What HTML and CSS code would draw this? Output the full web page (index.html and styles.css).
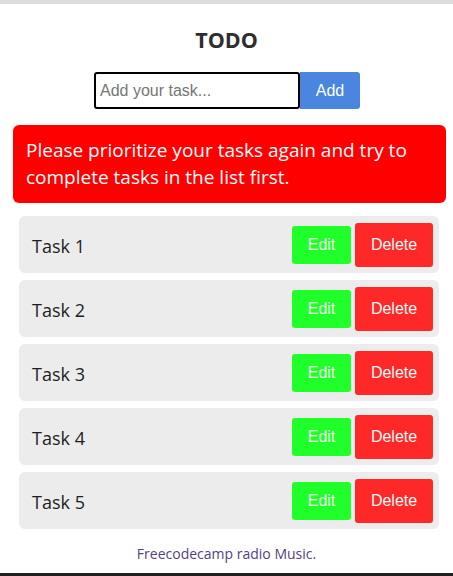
FILE: index.html
```html
<!DOCTYPE html>
<html lang="en">
<head>
<meta charset="utf-8">
<title>TODO</title>
<link rel="stylesheet" href="styles.css">
</head>
<body>
<div class="page">
  <div class="chrome"></div>
  <main class="app">
    <h1 class="title">TODO</h1>
    <form class="add-form">
      <input class="task-input" type="text" placeholder="Add your task...">
      <button class="btn btn-add" type="button">Add</button>
    </form>
    <div class="alert">Please prioritize your tasks again and try to complete tasks in the list first.</div>
    <ul class="tasks">
      <li class="task"><span class="task-name">Task 1</span><span class="actions"><button class="btn btn-edit" type="button">Edit</button><button class="btn btn-delete" type="button">Delete</button></span></li>
      <li class="task"><span class="task-name">Task 2</span><span class="actions"><button class="btn btn-edit" type="button">Edit</button><button class="btn btn-delete" type="button">Delete</button></span></li>
      <li class="task"><span class="task-name">Task 3</span><span class="actions"><button class="btn btn-edit" type="button">Edit</button><button class="btn btn-delete" type="button">Delete</button></span></li>
      <li class="task"><span class="task-name">Task 4</span><span class="actions"><button class="btn btn-edit" type="button">Edit</button><button class="btn btn-delete" type="button">Delete</button></span></li>
      <li class="task"><span class="task-name">Task 5</span><span class="actions"><button class="btn btn-edit" type="button">Edit</button><button class="btn btn-delete" type="button">Delete</button></span></li>
    </ul>
    <p class="footer">Freecodecamp radio Music.</p>
  </main>
  <div class="taskbar"></div>
</div>
</body>
</html>
```
FILE: styles.css
```css
* { box-sizing: border-box; }

html, body {
  margin: 0;
  padding: 0;
  background: #ffffff;
}

body {
  font-family: "Open Sans", "Noto Sans", sans-serif;
  color: #222;
}

.page {
  min-height: 576px;
  display: flex;
  flex-direction: column;
  overflow: hidden;
}

.chrome {
  height: 4px;
  background: #dddddd;
}

.app {
  display: flex;
  flex-direction: column;
  padding-top: 22px;
}

.title {
  margin: 0;
  font-size: 21.5px;
  line-height: 28px;
  font-weight: 700;
  color: #2e2e2e;
  text-align: center;
}

.add-form {
  margin: 18px 0 0;
  display: flex;
  justify-content: center;
  padding-left: 1px;
}

.task-input {
  width: 206px;
  height: 37px;
  margin: 0;
  border: 2px solid #000;
  border-radius: 3px;
  padding: 0 4px;
  font-family: "Liberation Sans", Arial, sans-serif;
  font-size: 16px;
  color: #222;
  outline: none;
}

.task-input::placeholder {
  color: #767676;
}

.btn {
  font-family: "Liberation Sans", Arial, sans-serif;
  font-size: 16px;
  border: none;
  margin: 0;
  cursor: pointer;
  line-height: 18px;
}

.btn-add {
  width: 60px;
  height: 37px;
  background: #4a86df;
  color: #fff;
  border-radius: 0 3px 3px 0;
}

.alert {
  margin: 16px 7px 0 13px;
  height: 78px;
  padding: 12px 13px;
  background: #ff0000;
  color: #fff;
  border-radius: 6px;
  font-size: 19px;
  line-height: 27px;
}

.tasks {
  list-style: none;
  margin: 13px 14px 0 19px;
  padding: 0;
  display: flex;
  flex-direction: column;
  gap: 7px;
}

.task {
  height: 57px;
  background: #ececec;
  border-radius: 6px;
  display: flex;
  align-items: center;
  justify-content: space-between;
  padding: 0 6px 0 13px;
}

.task-name {
  font-size: 18px;
  padding-top: 3px;
  color: #1e1e1e;
}

.actions {
  display: flex;
  align-items: center;
  gap: 4px;
}

.btn-edit {
  width: 59px;
  height: 38px;
  background: #20ff2a;
  color: #e8ffe8;
  border-radius: 3px;
}

.btn-delete {
  width: 78px;
  height: 44px;
  background: #ff2828;
  color: #f8f8f8;
  border-radius: 3px;
}

.footer {
  margin: 15px 0 0;
  text-align: center;
  font-size: 14px;
  line-height: 20px;
  color: #553f86;
}

.taskbar {
  margin-top: auto;
  height: 3px;
  background: #202020;
}
```
